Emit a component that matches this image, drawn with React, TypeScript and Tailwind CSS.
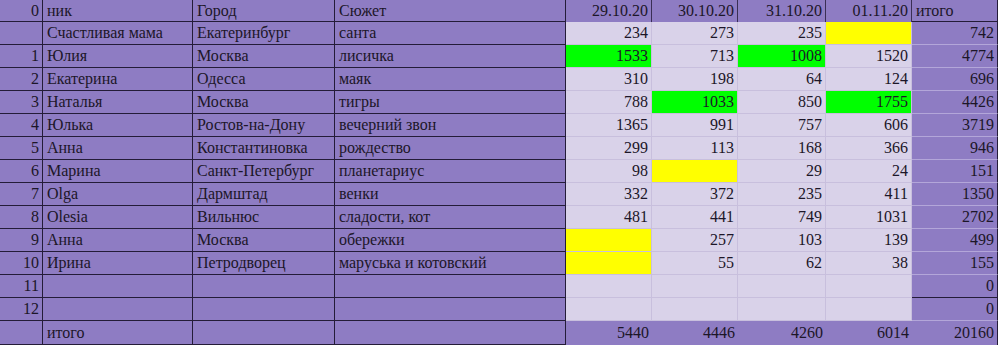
import React from 'react';

type Mark = 'g' | 'y' | null;

interface Row {
  idx: string;
  nick: string;
  city: string;
  plot: string;
  days: (number | null)[];
  marks: Mark[];
  total: number;
}

const rows: Row[] = [
  { idx: '', nick: 'Счастливая мама', city: 'Екатеринбург', plot: 'санта', days: [234, 273, 235, null], marks: [null, null, null, 'y'], total: 742 },
  { idx: '1', nick: 'Юлия', city: 'Москва', plot: 'лисичка', days: [1533, 713, 1008, 1520], marks: ['g', null, 'g', null], total: 4774 },
  { idx: '2', nick: 'Екатерина', city: 'Одесса', plot: 'маяк', days: [310, 198, 64, 124], marks: [null, null, null, null], total: 696 },
  { idx: '3', nick: 'Наталья', city: 'Москва', plot: 'тигры', days: [788, 1033, 850, 1755], marks: [null, 'g', null, 'g'], total: 4426 },
  { idx: '4', nick: 'Юлька', city: 'Ростов-на-Дону', plot: 'вечерний звон', days: [1365, 991, 757, 606], marks: [null, null, null, null], total: 3719 },
  { idx: '5', nick: 'Анна', city: 'Константиновка', plot: 'рождество', days: [299, 113, 168, 366], marks: [null, null, null, null], total: 946 },
  { idx: '6', nick: 'Марина', city: 'Санкт-Петербург', plot: 'планетариус', days: [98, null, 29, 24], marks: [null, 'y', null, null], total: 151 },
  { idx: '7', nick: 'Olga', city: 'Дармштад', plot: 'венки', days: [332, 372, 235, 411], marks: [null, null, null, null], total: 1350 },
  { idx: '8', nick: 'Olesia', city: 'Вильнюс', plot: 'сладости, кот', days: [481, 441, 749, 1031], marks: [null, null, null, null], total: 2702 },
  { idx: '9', nick: 'Анна', city: 'Москва', plot: 'обережки', days: [null, 257, 103, 139], marks: ['y', null, null, null], total: 499 },
  { idx: '10', nick: 'Ирина', city: 'Петродворец', plot: 'маруська и котовский', days: [null, 55, 62, 38], marks: ['y', null, null, null], total: 155 },
  { idx: '11', nick: '', city: '', plot: '', days: [null, null, null, null], marks: [null, null, null, null], total: 0 },
  { idx: '12', nick: '', city: '', plot: '', days: [null, null, null, null], marks: [null, null, null, null], total: 0 },
];

const dates = ['29.10.20', '30.10.20', '31.10.20', '01.11.20'];
const totals = [5440, 4446, 4260, 6014];

const grid = 'grid grid-cols-[43px_150px_142px_231px_86px_86px_88px_86px_86px]';
const purple = 'bg-[#8e7cc3] border-r border-b border-[#241c38]';
const left = 'flex items-center pl-[4px] overflow-hidden whitespace-nowrap';
const right = 'flex items-center justify-end pr-[3px] overflow-hidden whitespace-nowrap';

function dayCell(v: number | null, m: Mark, key: number) {
  const bg = m === 'g' ? 'bg-[#00ff00]' : m === 'y' ? 'bg-[#ffff00]' : 'bg-[#d9d2e9]';
  return (
    <div key={key} className={`${right} ${bg} border-r border-b border-[#c8bfdd]`}>
      {v ?? ''}
    </div>
  );
}

export default function App() {
  return (
    <div className="w-[1000px] h-[347px] bg-white text-[16px] leading-none text-[#1c1628] font-['Liberation_Serif','Times_New_Roman',serif]">
      <div className={`${grid} h-[22px]`}>
        <div className={`${purple} ${right}`}>0</div>
        <div className={`${purple} ${left}`}>ник</div>
        <div className={`${purple} ${left}`}>Город</div>
        <div className={`${purple} ${left}`}>Сюжет</div>
        {dates.map((d) => (
          <div key={d} className={`${right} bg-[#8e7cc3] border-r border-[#3a2f55]`}>
            {d}
          </div>
        ))}
        <div className={`${purple} ${left} pl-[2px]`}>итого</div>
      </div>

      {rows.map((r, i) => (
        <div key={i} className={`${grid} h-[23px]`}>
          <div className={`${purple} ${right}`}>{r.idx}</div>
          <div className={`${purple} ${left}`}>{r.nick}</div>
          <div className={`${purple} ${left}`}>{r.city}</div>
          <div className={`${purple} ${left}`}>{r.plot}</div>
          {r.days.map((v, j) => dayCell(v, r.marks[j], j))}
          <div
            className={`${right} bg-[#8e7cc3] border-r border-b border-r-[#241c38] ${
              r.idx === '11' ? 'border-b-[#241c38]' : 'border-b-[#b3a6d9]'
            }`}
          >
            {r.total}
          </div>
        </div>
      ))}

      <div className={`${grid} h-[24px]`}>
        <div className={`${purple} ${right}`}></div>
        <div className={`${purple} ${left}`}>итого</div>
        <div className={`${purple} ${left}`}></div>
        <div className={`${purple} ${left}`}></div>
        {totals.map((t) => (
          <div key={t} className={`${right} bg-[#8e7cc3]`}>
            {t}
          </div>
        ))}
        <div className={`${right} bg-[#8e7cc3] border-r border-[#241c38]`}>20160</div>
      </div>
    </div>
  );
}
